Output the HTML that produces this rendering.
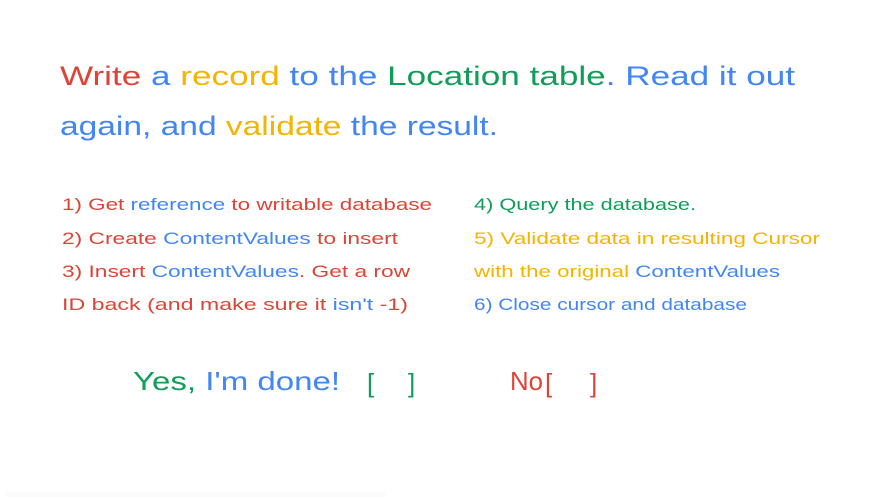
<!DOCTYPE html>
<html><head><meta charset="utf-8"><style>
html,body{margin:0;padding:0;background:#fff;width:873px;height:500px;overflow:hidden}
svg{display:block}
text{font-family:"Liberation Sans",sans-serif}
.r{fill:#db4437}.b{fill:#4285f4}.y{fill:#f4b400}.g{fill:#0f9d58}
</style></head><body>
<svg width="873" height="500" viewBox="0 0 873 500">
<rect x="5" y="492" width="380" height="5" fill="#fafafa"/>
<text x="60" y="85" font-size="27" textLength="735" lengthAdjust="spacingAndGlyphs"><tspan class="r">Write</tspan><tspan class="b"> a </tspan><tspan class="y">record</tspan><tspan class="b"> to the </tspan><tspan class="g">Location table</tspan><tspan class="b">. Read it out</tspan></text>
<text x="60" y="135" font-size="27" textLength="438" lengthAdjust="spacingAndGlyphs"><tspan class="b">again, and </tspan><tspan class="y">validate</tspan><tspan class="b"> the result.</tspan></text>

<g font-size="17">
<text x="62" y="210" textLength="370" lengthAdjust="spacingAndGlyphs"><tspan class="r">1) Get </tspan><tspan class="b">reference</tspan><tspan class="r"> to writable database</tspan></text>
<text x="62" y="244" textLength="336" lengthAdjust="spacingAndGlyphs"><tspan class="r">2) Create </tspan><tspan class="b">ContentValues</tspan><tspan class="r"> to insert</tspan></text>
<text x="62" y="277" textLength="348" lengthAdjust="spacingAndGlyphs"><tspan class="r">3) Insert </tspan><tspan class="b">ContentValues</tspan><tspan class="r">. Get a row</tspan></text>
<text x="62" y="310" textLength="346" lengthAdjust="spacingAndGlyphs"><tspan class="r">ID back (and make sure it </tspan><tspan class="b">isn't</tspan><tspan class="r"> -1)</tspan></text>

<text x="474" y="210" textLength="222" lengthAdjust="spacingAndGlyphs" class="g">4) Query the database.</text>
<text x="474" y="244" textLength="346" lengthAdjust="spacingAndGlyphs" class="y">5) Validate data in resulting Cursor</text>
<text x="474" y="277" textLength="306" lengthAdjust="spacingAndGlyphs"><tspan class="y">with the original </tspan><tspan class="b">ContentValues</tspan></text>
<text x="474" y="310" textLength="273" lengthAdjust="spacingAndGlyphs" class="b">6) Close cursor and database</text>
</g>

<g font-size="26">
<text x="133" y="390" textLength="207" lengthAdjust="spacingAndGlyphs"><tspan class="g">Yes, </tspan><tspan class="b">I'm done!</tspan></text>
<text x="367" y="392" class="g">[</text>
<text x="408" y="392" class="g">]</text>
<text x="510" y="390" textLength="33" lengthAdjust="spacingAndGlyphs" class="r">No</text>
<text x="545" y="392" class="r">[</text>
<text x="590" y="392" class="r">]</text>
</g>
</svg>
</body></html>
